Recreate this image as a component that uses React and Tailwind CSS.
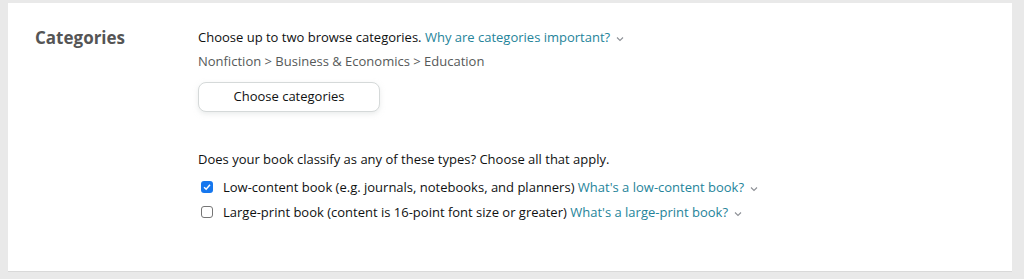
import React from "react";

function Chevron() {
    return (
        <svg
            className="ml-[6px] inline-block h-[6px] w-[8px] align-middle"
            viewBox="0 0 8 6"
            fill="none"
        >
            <path d="M1 1.5 L4 4.5 L7 1.5" stroke="#8d9096" strokeWidth="1.1" />
        </svg>
    );
}

function Check({ checked }) {
    if (checked) {
        return (
            <span className="flex h-[12px] w-[12px] shrink-0 items-center justify-center rounded-[3px] bg-[#1677ee]">
                <svg viewBox="0 0 12 12" className="h-[10px] w-[10px]" fill="none">
                    <path d="M2.5 6.2 L5 8.6 L9.6 3.4" stroke="white" strokeWidth="1.8" />
                </svg>
            </span>
        );
    }
    return (
        <span className="h-[12px] w-[12px] shrink-0 rounded-[3px] border border-[#767676] bg-white" />
    );
}

export default function App() {
    return (
        <div
            className="h-[279px] w-[1024px] bg-[#e9e9e9] pt-[3px] pl-[8px]"
            style={{ fontFamily: '"Open Sans", sans-serif' }}
        >
            <div className="flex h-[269px] w-[1004px] border-b border-[#d9d9d9] bg-white">
                <div className="w-[190px] pt-[23px] pl-[27px]">
                    <h2 className="text-[17px] font-bold leading-[24px] text-[#555555]">
                        Categories
                    </h2>
                </div>
                <div className="flex-1 pt-[24px] text-[13px] text-[#0f1111]">
                    <p className="leading-[20px]">
                        Choose up to two browse categories.{" "}
                        <span className="text-[#25849a]">
                            Why are categories important?
                        </span>
                        <Chevron />
                    </p>
                    <p className="mt-[4px] leading-[20px] text-[#565959]">
                        Nonfiction &gt; Business &amp; Economics &gt; Education
                    </p>
                    <button className="mt-[11px] h-[30px] w-[182px] rounded-[8px] border border-[#d5d9d9] bg-white text-[13px] text-[#0f1111] shadow-[0_2px_5px_rgba(213,217,217,0.5)]">
                        Choose categories
                    </button>
                    <p className="mt-[37px] leading-[20px]">
                        Does your book classify as any of these types? Choose all that apply.
                    </p>
                    <div className="mt-[8px] flex items-center gap-[10px] pl-[3px] leading-[20px]">
                        <Check checked />
                        <span>
                            Low-content book (e.g. journals, notebooks, and planners){" "}
                            <span className="text-[#25849a]">What's a low-content book?</span>
                            <Chevron />
                        </span>
                    </div>
                    <div className="mt-[5px] flex items-center gap-[10px] pl-[3px] leading-[20px]">
                        <Check />
                        <span>
                            Large-print book (content is 16-point font size or greater){" "}
                            <span className="text-[#25849a]">What's a large-print book?</span>
                            <Chevron />
                        </span>
                    </div>
                </div>
            </div>
        </div>
    );
}
